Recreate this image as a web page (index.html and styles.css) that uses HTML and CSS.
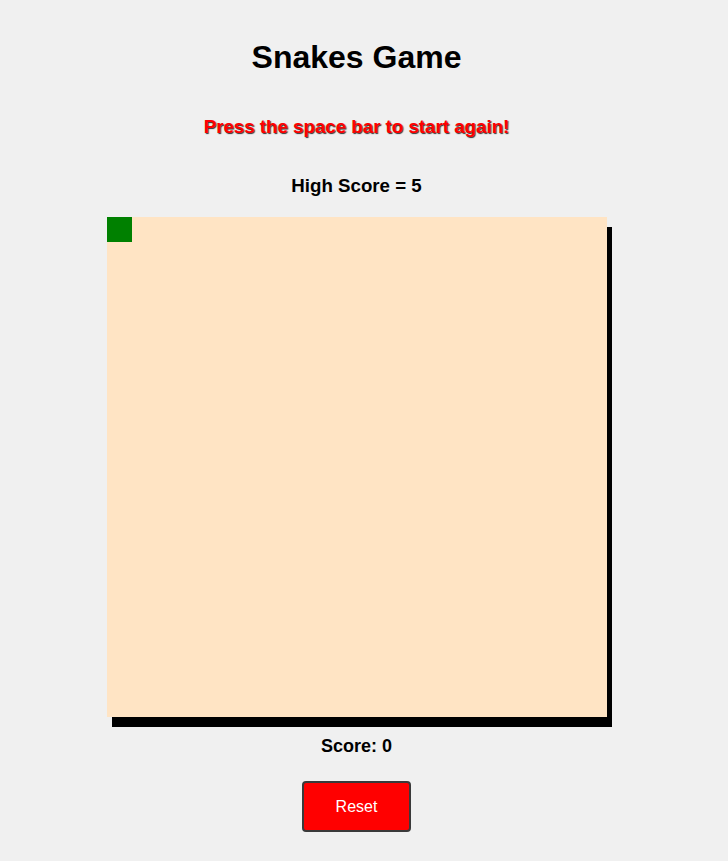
FILE: index.html
```html
<!DOCTYPE html>
<html>
<head>
<meta charset="utf-8">
<link rel="stylesheet" href="styles.css">
</head>
<body>
<div class="page">
  <h1 class="title">Snakes Game</h1>
  <p class="message">Press the space bar to start again!</p>
  <p class="high">High Score = 5</p>
  <div class="board"><div class="snake"></div></div>
  <p class="score">Score: 0</p>
  <button class="reset">Reset</button>
</div>
</body>
</html>
```
FILE: styles.css
```css
html, body { margin: 0; padding: 0; background: #f0f0f0; }
body { font-family: "Liberation Sans", Arial, sans-serif; }
.page {
  width: 713px;
  display: flex;
  flex-direction: column;
  align-items: center;
  padding-top: 39px;
}
.title { margin: 0; font-size: 32px; line-height: 37px; font-weight: bold; color: #000; }
.message {
  margin: 40px 0 0;
  font-size: 18.72px; line-height: 22px; font-weight: bold; color: #ff0000;
  text-shadow: 1px 1px 1px #333;
}
.high { margin: 37px 0 0; font-size: 18.72px; line-height: 22px; font-weight: bold; }
.board {
  margin-top: 20px;
  width: 500px; height: 500px;
  background: #ffe4c4;
  box-shadow: 5px 10px 0 #000;
  position: relative;
}
.snake { width: 25px; height: 25px; background: #008000; }
.score { margin: 19px 0 0; font-size: 18px; line-height: 21px; font-weight: bold; }
.reset {
  margin-top: 24px;
  width: 109px; height: 51px;
  background: #ff0000; color: #fff;
  border: 2px solid #3a3a3a; border-radius: 4px;
  font-family: "Liberation Sans", Arial, sans-serif; font-size: 16px;
}
```
